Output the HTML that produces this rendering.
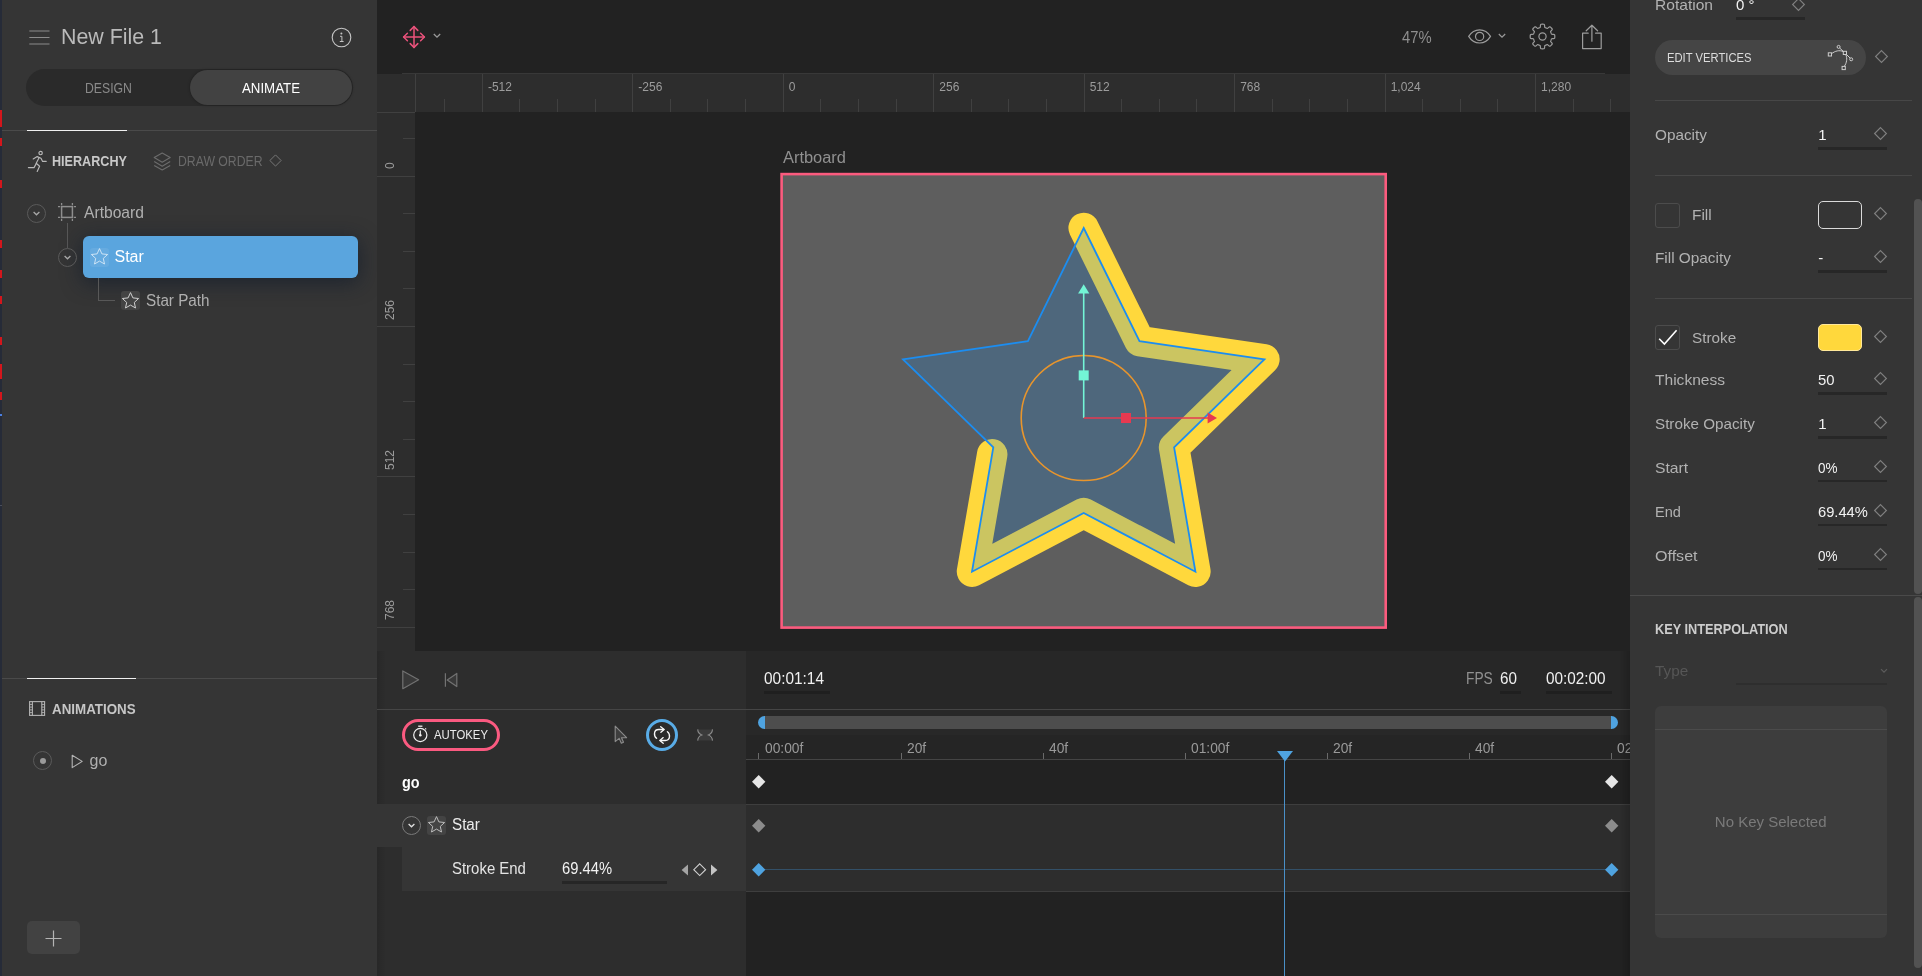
<!DOCTYPE html>
<html>
<head>
<meta charset="utf-8">
<title>New File 1</title>
<style>
*{box-sizing:border-box;margin:0;padding:0}
html,body{width:1922px;height:976px;overflow:hidden;background:#222222;font-family:"Liberation Sans",sans-serif;color:#bdbdbd}
.abs,.abs *{position:absolute}
#app{position:absolute;left:0;top:0;width:1922px;height:976px;overflow:hidden;will-change:transform}
.t{white-space:nowrap;line-height:1}
svg{overflow:visible}
/* left strip */
#strip{left:0;top:0;width:2px;height:976px;background:#262b38}
#strip i{left:0;width:2px;background:#d4161c}
/* left panel */
#left{left:2px;top:0;width:375px;height:976px;background:#353535}
/* center */
#ctop{left:377px;top:0;width:1253px;height:74px;background:#222222}
#hruler{left:377px;top:74px;width:1253px;height:38px;background:#2d2d2d}
#vruler{left:377px;top:112px;width:38px;height:539px;background:#2d2d2d}
#canvas{left:415px;top:112px;width:1215px;height:539px;background:#222222;overflow:hidden}
/* timeline */
#tl-left{left:377px;top:651px;width:369px;height:325px;background:#2d2d2d}
#tl-right{left:746px;top:651px;width:884px;height:325px;background:#222222;overflow:hidden}
/* right panel */
#right{left:1630px;top:0;width:292px;height:976px;background:#353535;overflow:hidden}

/* ---- left panel ---- */
#left .div{left:0;width:375px;height:1px;background:#4a4a4a}
#left .tab{height:1.5px;background:#f0f0f0}
.seg{left:24px;top:69px;width:327px;height:37px;border-radius:18.5px;background:#2a2a2a}
.seg .on{left:164px;top:1px;width:162px;height:35px;border-radius:17.5px;background:#424242;box-shadow:0 0 3px rgba(0,0,0,.35)}
.chev{width:19px;height:19px;border:1px solid #5a5a5a;border-radius:50%}
.sel{left:81px;top:236px;width:275px;height:42px;border-radius:6px;background:#5aa5de;box-shadow:0 4px 20px 1px rgba(16,26,44,.64)}
.ibox{width:19px;height:19px;border-radius:3px}

/* ---- rulers ---- */
.tk{background:#404040}
.rl{font-size:12px;color:#9c9c9c}

/* ---- right panel ---- */
#right .lb{left:24.8px;font-size:15px;color:#b2b2b2;transform-origin:0 50%}
#right .vl{left:188.2px;font-size:15px;color:#f2f2f2;transform-origin:0 50%}
#right .ul{left:188.2px;width:68.8px;height:2.5px;background:#272727}
#right .hd{left:24.8px;width:257.2px;height:1px;background:#474747}
.dm{width:13px;height:13px}
.thumb{left:284px;width:7.6px;border-radius:4px;background:#525252}

/* ---- timeline ---- */
.kd{width:13.4px;height:13.4px}
</style>
</head>
<body>
<div id="app" class="abs">
<div id="strip"><i style="top:110px;height:17px"></i><i style="top:138px;height:8px"></i><i style="top:180px;height:8px"></i><i style="top:240px;height:8px"></i><i style="top:270px;height:8px"></i><i style="top:296px;height:8px"></i><i style="top:337px;height:8px"></i><i style="top:364px;height:15px"></i><i style="top:392px;height:8px"></i><i style="top:414px;height:2px;background:#4a7fe0"></i><i style="top:505px;height:1px;background:#4a4e5a"></i></div>
<div id="left">
<div class="div" style="top:130px"></div>
<div class="tab" style="left:25px;top:129.6px;width:100px"></div>
<div class="div" style="top:678px"></div>
<div class="tab" style="left:25px;top:677.6px;width:109px"></div>

<!-- header -->
<svg style="left:27px;top:29px" width="22" height="17" viewBox="0 0 22 17"><path d="M0.3 2H20.5M0.3 8.5H20.5M0.3 15H20.5" stroke="#8c8c8c" stroke-width="1.1" fill="none"/></svg>
<span class="t" style="left:59px;top:26.4px;font-size:22px;color:#bababa;transform:scaleX(.972);transform-origin:0 50%">New File 1</span>
<svg style="left:329px;top:27px" width="21" height="21" viewBox="0 0 21 21"><circle cx="10.5" cy="10.5" r="9.3" fill="none" stroke="#c4c4c4" stroke-width="1.1"/><circle cx="10.4" cy="6.6" r="1" fill="#c4c4c4"/><path d="M9 9.3H10.9V14.4M8.8 14.5H12.6" stroke="#c4c4c4" stroke-width="1" fill="none"/></svg>

<!-- design / animate -->
<div class="seg"><div class="on"></div></div>
<span class="t" style="left:82.5px;top:81.4px;font-size:14px;color:#8a8a8a;transform:scaleX(.875);transform-origin:0 50%">DESIGN</span>
<span class="t" style="left:239.8px;top:81.4px;font-size:14px;color:#ffffff;transform:scaleX(.948);transform-origin:0 50%">ANIMATE</span>

<!-- hierarchy tabs -->
<svg id="ic-run" style="left:25px;top:150px" width="21" height="23" viewBox="0 0 21 23"><g fill="none" stroke="#b8b8b8" stroke-width="1.15" stroke-linecap="round" stroke-linejoin="round"><circle cx="13.6" cy="3" r="1.7"/><path d="M6.2 8.9L10.2 6.6L14 8.2L15.6 11.4H19.2"/><path d="M12.2 7.6L9.2 13.2L12.6 16.2L10.2 21.4"/><path d="M9.4 13.4L7 17.6H1.4"/></g></svg>
<span class="t" style="left:50px;top:154.4px;font-size:14px;font-weight:700;color:#c8c8c8;transform:scaleX(.9);transform-origin:0 50%">HIERARCHY</span>
<svg id="ic-layers" style="left:151px;top:152px" width="19" height="20" viewBox="0 0 19 20"><g fill="none" stroke="#6c6c6c" stroke-width="1.1" stroke-linejoin="round"><path d="M9.2 1L17.2 5.6L9.2 10.2L1.2 5.6Z"/><path d="M1.2 9.6L9.2 14.2L17.2 9.6"/><path d="M1.2 13.4L9.2 18L17.2 13.4"/></g></svg>
<span class="t" style="left:175.5px;top:154.4px;font-size:14px;color:#6a6a6a;transform:scaleX(.874);transform-origin:0 50%">DRAW ORDER</span>
<svg style="left:267px;top:154px" width="13" height="13" viewBox="0 0 13 13"><path d="M6.5 0.9L12.1 6.5L6.5 12.1L0.9 6.5Z" fill="none" stroke="#767676" stroke-width="1"/></svg>

<!-- tree -->
<div class="chev" style="left:25px;top:204px"></div>
<svg style="left:30px;top:210px" width="9" height="7" viewBox="0 0 9 7"><path d="M1.6 2L4.5 4.8L7.4 2" fill="none" stroke="#a8a8a8" stroke-width="1.3"/></svg>
<svg id="ic-artb" style="left:56px;top:203px" width="18" height="18" viewBox="0 0 18 18"><g fill="none" stroke="#8e8e8e" stroke-width="1.5"><rect x="3.6" y="3.6" width="10.8" height="10.8"/><path d="M3.6 0V2.2M14.4 0V2.2M3.6 15.8V18M14.4 15.8V18M0 3.6H2.2M0 14.4H2.2M15.8 3.6H18M15.8 14.4H18" stroke-width="1.3"/></g></svg>
<span class="t" style="left:81.8px;top:205.2px;font-size:16px;color:#b0b0b0;transform:scaleX(.977);transform-origin:0 50%">Artboard</span>
<div style="left:65px;top:223px;width:1px;height:25px;background:#585858"></div>

<div class="sel"></div>
<div class="chev" style="left:56px;top:247.5px"></div>
<svg style="left:61px;top:253.5px" width="9" height="7" viewBox="0 0 9 7"><path d="M1.6 2L4.5 4.8L7.4 2" fill="none" stroke="#a8a8a8" stroke-width="1.3"/></svg>
<div class="ibox" style="left:88px;top:247.5px;background:#66abe0"></div>
<svg style="left:88px;top:247px" width="19" height="19" viewBox="0 0 19 19"><path d="M9.5 1.6L11.9 6.9L17.6 7.5L13.3 11.4L14.5 17L9.5 14.1L4.5 17L5.7 11.4L1.4 7.5L7.1 6.9Z" fill="none" stroke="#e6f1fa" stroke-width=".8" stroke-linejoin="round"/></svg>
<span class="t" style="left:112.5px;top:248.7px;font-size:16px;color:#ffffff">Star</span>

<div style="left:96px;top:278px;width:1px;height:23px;background:#585858"></div>
<div style="left:96px;top:300px;width:17px;height:1px;background:#585858"></div>
<div class="ibox" style="left:119px;top:291px;background:#444444"></div>
<svg style="left:119px;top:290.5px" width="19" height="19" viewBox="0 0 19 19"><path d="M9.5 1.6L11.9 6.9L17.6 7.5L13.3 11.4L14.5 17L9.5 14.1L4.5 17L5.7 11.4L1.4 7.5L7.1 6.9Z" fill="none" stroke="#cfcfcf" stroke-width="1" stroke-linejoin="round"/></svg>
<span class="t" style="left:143.7px;top:293.3px;font-size:16px;color:#b0b0b0;transform:scaleX(.952);transform-origin:0 50%">Star Path</span>

<!-- animations -->
<svg id="ic-film" style="left:26.9px;top:701px" width="16.2" height="15" viewBox="0 0 16.2 15"><g fill="none" stroke="#b4b4b4" stroke-width="1.1"><rect x="0.6" y="0.6" width="15" height="13.8"/><path d="M3.4 0.6V14.4M12.8 0.6V14.4"/><path d="M0.6 3.4H3.4M0.6 6.1H3.4M0.6 8.9H3.4M0.6 11.6H3.4M12.8 3.4H15.6M12.8 6.1H15.6M12.8 8.9H15.6M12.8 11.6H15.6" stroke-width=".9"/></g></svg>
<span class="t" style="left:50px;top:701.5px;font-size:14px;font-weight:700;color:#c6c6c6;transform:scaleX(.954);transform-origin:0 50%">ANIMATIONS</span>
<div class="chev" style="left:30.8px;top:751.3px"></div>
<div style="left:38px;top:758px;width:6px;height:6px;border-radius:50%;background:#9a9a9a"></div>
<svg style="left:69px;top:754px" width="13" height="15" viewBox="0 0 13 15"><path d="M1.2 1.2L11.2 7.4L1.2 13.6Z" fill="none" stroke="#b4b4b4" stroke-width="1.1" stroke-linejoin="round"/></svg>
<span class="t" style="left:87.5px;top:752.8px;font-size:16px;color:#b0b0b0">go</span>
<div style="left:25px;top:921px;width:53px;height:33px;border-radius:5px;background:#424242"></div>
<svg style="left:43px;top:930px" width="17" height="17" viewBox="0 0 17 17"><path d="M8.5 0.5V16.5M0.5 8.5H16.5" stroke="#b4b4b4" stroke-width="1.2" fill="none"/></svg>
</div>
<div id="ctop">
<div style="left:25px;top:73px;width:1203px;height:1px;background:#383838"></div>
<svg style="left:25px;top:25px" width="24" height="24" viewBox="0 0 24 24"><g fill="none" stroke="#ea527b" stroke-width="1.5" stroke-linecap="round" stroke-linejoin="round"><path d="M12 1.6V22.4M1.6 12H22.4"/><path d="M8.2 5.4L12 1.6L15.8 5.4M8.2 18.6L12 22.4L15.8 18.6M5.4 8.2L1.6 12L5.4 15.8M18.6 8.2L22.4 12L18.6 15.8"/></g></svg>
<svg style="left:56px;top:33px" width="8" height="6" viewBox="0 0 8 6"><path d="M0.8 1L4 4.2L7.2 1" fill="none" stroke="#9a9a9a" stroke-width="1.3"/></svg>
<span class="t" style="left:1025.3px;top:29.7px;font-size:16px;color:#8e8e8e;transform:scaleX(.925);transform-origin:0 50%">47%</span>
<svg style="left:1091px;top:29px" width="23" height="15" viewBox="0 0 23 15"><g fill="none" stroke="#9c9c9c" stroke-width="1.2"><path d="M0.7 7.4C3.6 2.6 7.4 0.8 11.6 0.8C15.8 0.8 19.6 2.6 22.5 7.4C19.6 12.2 15.8 14 11.6 14C7.4 14 3.6 12.2 0.7 7.4Z"/><circle cx="11.6" cy="7.4" r="4.1"/></g></svg>
<svg style="left:1121px;top:33px" width="8" height="6" viewBox="0 0 8 6"><path d="M0.8 1L4 4.2L7.2 1" fill="none" stroke="#9a9a9a" stroke-width="1.2"/></svg>
<svg id="ic-gear" style="left:1153px;top:24px" width="25" height="25" viewBox="0 0 25 25"><g fill="none" stroke="#9c9c9c" stroke-width="1.2" stroke-linejoin="round"><path d="M12.50 0.20 L12.82 0.20 L13.14 0.22 L13.47 0.24 L13.79 0.27 L14.11 0.31 L14.38 0.61 L14.56 1.41 L14.64 2.41 L14.73 3.20 L14.91 3.52 L15.14 3.58 L15.37 3.66 L15.60 3.73 L15.83 3.82 L16.06 3.91 L16.28 4.00 L16.50 4.11 L16.72 4.21 L16.94 4.33 L17.15 4.45 L17.50 4.35 L18.12 3.85 L18.89 3.20 L19.58 2.76 L19.99 2.74 L20.24 2.94 L20.49 3.15 L20.73 3.36 L20.97 3.58 L21.20 3.80 L21.42 4.03 L21.64 4.27 L21.85 4.51 L22.06 4.76 L22.26 5.01 L22.24 5.42 L21.80 6.11 L21.15 6.88 L20.65 7.50 L20.55 7.85 L20.67 8.06 L20.79 8.28 L20.89 8.50 L21.00 8.72 L21.09 8.94 L21.18 9.17 L21.27 9.40 L21.34 9.63 L21.42 9.86 L21.48 10.09 L21.80 10.27 L22.59 10.36 L23.59 10.44 L24.39 10.62 L24.69 10.89 L24.73 11.21 L24.76 11.53 L24.78 11.86 L24.80 12.18 L24.80 12.50 L24.80 12.82 L24.78 13.14 L24.76 13.47 L24.73 13.79 L24.69 14.11 L24.39 14.38 L23.59 14.56 L22.59 14.64 L21.80 14.73 L21.48 14.91 L21.42 15.14 L21.34 15.37 L21.27 15.60 L21.18 15.83 L21.09 16.06 L21.00 16.28 L20.89 16.50 L20.79 16.72 L20.67 16.94 L20.55 17.15 L20.65 17.50 L21.15 18.12 L21.80 18.89 L22.24 19.58 L22.26 19.99 L22.06 20.24 L21.85 20.49 L21.64 20.73 L21.42 20.97 L21.20 21.20 L20.97 21.42 L20.73 21.64 L20.49 21.85 L20.24 22.06 L19.99 22.26 L19.58 22.24 L18.89 21.80 L18.12 21.15 L17.50 20.65 L17.15 20.55 L16.94 20.67 L16.72 20.79 L16.50 20.89 L16.28 21.00 L16.06 21.09 L15.83 21.18 L15.60 21.27 L15.37 21.34 L15.14 21.42 L14.91 21.48 L14.73 21.80 L14.64 22.59 L14.56 23.59 L14.38 24.39 L14.11 24.69 L13.79 24.73 L13.47 24.76 L13.14 24.78 L12.82 24.80 L12.50 24.80 L12.18 24.80 L11.86 24.78 L11.53 24.76 L11.21 24.73 L10.89 24.69 L10.62 24.39 L10.44 23.59 L10.36 22.59 L10.27 21.80 L10.09 21.48 L9.86 21.42 L9.63 21.34 L9.40 21.27 L9.17 21.18 L8.94 21.09 L8.72 21.00 L8.50 20.89 L8.28 20.79 L8.06 20.67 L7.85 20.55 L7.50 20.65 L6.88 21.15 L6.11 21.80 L5.42 22.24 L5.01 22.26 L4.76 22.06 L4.51 21.85 L4.27 21.64 L4.03 21.42 L3.80 21.20 L3.58 20.97 L3.36 20.73 L3.15 20.49 L2.94 20.24 L2.74 19.99 L2.76 19.58 L3.20 18.89 L3.85 18.12 L4.35 17.50 L4.45 17.15 L4.33 16.94 L4.21 16.72 L4.11 16.50 L4.00 16.28 L3.91 16.06 L3.82 15.83 L3.73 15.60 L3.66 15.37 L3.58 15.14 L3.52 14.91 L3.20 14.73 L2.41 14.64 L1.41 14.56 L0.61 14.38 L0.31 14.11 L0.27 13.79 L0.24 13.47 L0.22 13.14 L0.20 12.82 L0.20 12.50 L0.20 12.18 L0.22 11.86 L0.24 11.53 L0.27 11.21 L0.31 10.89 L0.61 10.62 L1.41 10.44 L2.41 10.36 L3.20 10.27 L3.52 10.09 L3.58 9.86 L3.66 9.63 L3.73 9.40 L3.82 9.17 L3.91 8.94 L4.00 8.72 L4.11 8.50 L4.21 8.28 L4.33 8.06 L4.45 7.85 L4.35 7.50 L3.85 6.88 L3.20 6.11 L2.76 5.42 L2.74 5.01 L2.94 4.76 L3.15 4.51 L3.36 4.27 L3.58 4.03 L3.80 3.80 L4.03 3.58 L4.27 3.36 L4.51 3.15 L4.76 2.94 L5.01 2.74 L5.42 2.76 L6.11 3.20 L6.88 3.85 L7.50 4.35 L7.85 4.45 L8.06 4.33 L8.28 4.21 L8.50 4.11 L8.72 4.00 L8.94 3.91 L9.17 3.82 L9.40 3.73 L9.63 3.66 L9.86 3.58 L10.09 3.52 L10.27 3.20 L10.36 2.41 L10.44 1.41 L10.62 0.61 L10.89 0.31 L11.21 0.27 L11.53 0.24 L11.86 0.22 L12.18 0.20Z"/><circle cx="12.5" cy="12.5" r="3.6"/></g></svg>
<svg style="left:1204px;top:24px" width="22" height="26" viewBox="0 0 22 26"><g fill="none" stroke="#9c9c9c" stroke-width="1.2" stroke-linecap="round" stroke-linejoin="round"><path d="M7.2 9.2H1.6V24.6H20.2V9.2H14.6"/><path d="M10.9 1.2V17.2M5.2 6.8L10.9 1.2L16.6 6.8"/></g></svg>
</div>
<div id="hruler"><div class="tk" style="left:38px;top:0;width:1px;height:38px"></div><div class="tk" style="left:67.0px;top:25px;width:1px;height:13px"></div><div class="tk" style="left:104.7px;top:0;width:1px;height:38px"></div><span class="t rl" style="left:110.9px;top:6.9px">-512</span><div class="tk" style="left:142.3px;top:25px;width:1px;height:13px"></div><div class="tk" style="left:179.9px;top:25px;width:1px;height:13px"></div><div class="tk" style="left:217.5px;top:25px;width:1px;height:13px"></div><div class="tk" style="left:255.1px;top:0;width:1px;height:38px"></div><span class="t rl" style="left:261.3px;top:6.9px">-256</span><div class="tk" style="left:292.7px;top:25px;width:1px;height:13px"></div><div class="tk" style="left:330.4px;top:25px;width:1px;height:13px"></div><div class="tk" style="left:368.0px;top:25px;width:1px;height:13px"></div><div class="tk" style="left:405.6px;top:0;width:1px;height:38px"></div><span class="t rl" style="left:411.8px;top:6.9px">0</span><div class="tk" style="left:443.2px;top:25px;width:1px;height:13px"></div><div class="tk" style="left:480.8px;top:25px;width:1px;height:13px"></div><div class="tk" style="left:518.5px;top:25px;width:1px;height:13px"></div><div class="tk" style="left:556.1px;top:0;width:1px;height:38px"></div><span class="t rl" style="left:562.3px;top:6.9px">256</span><div class="tk" style="left:593.7px;top:25px;width:1px;height:13px"></div><div class="tk" style="left:631.3px;top:25px;width:1px;height:13px"></div><div class="tk" style="left:668.9px;top:25px;width:1px;height:13px"></div><div class="tk" style="left:706.5px;top:0;width:1px;height:38px"></div><span class="t rl" style="left:712.7px;top:6.9px">512</span><div class="tk" style="left:744.2px;top:25px;width:1px;height:13px"></div><div class="tk" style="left:781.8px;top:25px;width:1px;height:13px"></div><div class="tk" style="left:819.4px;top:25px;width:1px;height:13px"></div><div class="tk" style="left:857.0px;top:0;width:1px;height:38px"></div><span class="t rl" style="left:863.2px;top:6.9px">768</span><div class="tk" style="left:894.6px;top:25px;width:1px;height:13px"></div><div class="tk" style="left:932.2px;top:25px;width:1px;height:13px"></div><div class="tk" style="left:969.9px;top:25px;width:1px;height:13px"></div><div class="tk" style="left:1007.5px;top:0;width:1px;height:38px"></div><span class="t rl" style="left:1013.7px;top:6.9px">1,024</span><div class="tk" style="left:1045.1px;top:25px;width:1px;height:13px"></div><div class="tk" style="left:1082.7px;top:25px;width:1px;height:13px"></div><div class="tk" style="left:1120.3px;top:25px;width:1px;height:13px"></div><div class="tk" style="left:1157.9px;top:0;width:1px;height:38px"></div><span class="t rl" style="left:1164.1px;top:6.9px">1,280</span><div class="tk" style="left:1195.6px;top:25px;width:1px;height:13px"></div><div class="tk" style="left:1233.2px;top:25px;width:1px;height:13px"></div></div>
<div id="vruler"><div class="tk" style="left:0;top:0;width:38px;height:1px"></div><div class="tk" style="left:26px;top:25.9px;width:12px;height:1px"></div><div class="tk" style="left:0;top:63.5px;width:38px;height:1px"></div><span class="t rl" style="left:6.8px;top:57.0px;transform:rotate(-90deg);transform-origin:0 0">0</span><div class="tk" style="left:26px;top:101.1px;width:12px;height:1px"></div><div class="tk" style="left:26px;top:138.7px;width:12px;height:1px"></div><div class="tk" style="left:26px;top:176.4px;width:12px;height:1px"></div><div class="tk" style="left:0;top:214.0px;width:38px;height:1px"></div><span class="t rl" style="left:6.8px;top:207.5px;transform:rotate(-90deg);transform-origin:0 0">256</span><div class="tk" style="left:26px;top:251.6px;width:12px;height:1px"></div><div class="tk" style="left:26px;top:289.2px;width:12px;height:1px"></div><div class="tk" style="left:26px;top:326.8px;width:12px;height:1px"></div><div class="tk" style="left:0;top:364.4px;width:38px;height:1px"></div><span class="t rl" style="left:6.8px;top:357.9px;transform:rotate(-90deg);transform-origin:0 0">512</span><div class="tk" style="left:26px;top:402.1px;width:12px;height:1px"></div><div class="tk" style="left:26px;top:439.7px;width:12px;height:1px"></div><div class="tk" style="left:26px;top:477.3px;width:12px;height:1px"></div><div class="tk" style="left:0;top:514.9px;width:38px;height:1px"></div><span class="t rl" style="left:6.8px;top:508.4px;transform:rotate(-90deg);transform-origin:0 0">768</span></div>
<div id="canvas">
<svg style="left:0;top:0" width="1215" height="539" viewBox="415 112 1215 539">
<rect x="781.6" y="174.1" width="604.1" height="453.5" fill="#5e5e5e" stroke="#fb5b7e" stroke-width="2.6"/>
<polyline points="1083.7,228.0 1139.5,341.1 1264.4,359.3 1174.1,447.4 1195.4,571.7 1083.7,513.0 972.0,571.7 992.2,454.3" fill="none" stroke="#ffd83c" stroke-width="30.5" stroke-linecap="round" stroke-linejoin="round"/>
<polygon points="1083.7,228.0 1139.5,341.1 1264.4,359.3 1174.1,447.4 1195.4,571.7 1083.7,513.0 972.0,571.7 993.3,447.4 903.0,359.3 1027.9,341.1" fill="rgba(23,134,228,0.225)" stroke="#1c8df0" stroke-width="1.8" stroke-linejoin="miter"/>
<circle cx="1083.7" cy="418.0" r="62.5" fill="none" stroke="#e8952c" stroke-width="1.6"/>
<path d="M1083.7 418.0V292" stroke="#73f5d6" stroke-width="1.6" fill="none"/>
<path d="M1083.7 284.3L1089.3 293.6H1078.1000000000001Z" fill="#73f5d6"/>
<rect x="1078.7" y="370.4" width="10" height="10" fill="#73f5d6"/>
<path d="M1083.7 418.0H1209" stroke="#e63950" stroke-width="1.6" fill="none"/>
<path d="M1217 418.0L1207.6 412.4V423.6Z" fill="#e63950"/>
<rect x="1121" y="413.0" width="10" height="10" fill="#e63950"/>
</svg>
<span class="t" style="left:368px;top:38.2px;font-size:16px;color:#909090;transform:scaleX(1.026);transform-origin:0 50%">Artboard</span>
</div>
<div id="tl-left"><div style="left:0;top:0;width:9px;height:325px;background:linear-gradient(90deg,rgba(0,0,0,.12),rgba(0,0,0,0))"></div><div style="left:0;top:58px;width:369px;height:1px;background:#454545"></div><svg style="left:25px;top:19px" width="18" height="20" viewBox="0 0 18 20"><path d="M0.8 0.9L16.6 9.8L0.8 18.7Z" fill="#393939" stroke="#727272" stroke-width="1.2" stroke-linejoin="round"/></svg><svg style="left:67px;top:21px" width="14" height="16" viewBox="0 0 14 16"><path d="M1.4 1.2V14.8M12.8 1.4V14.6L3.2 8Z" fill="#393939" stroke="#727272" stroke-width="1.2" stroke-linejoin="round"/></svg><div style="left:24.9px;top:67.7px;width:98.2px;height:32.5px;border:3.1px solid #fa5a80;border-radius:16.3px;background:#2b2b2b"></div><svg id="ic-sw" style="left:35px;top:74px" width="17" height="18" viewBox="0 0 17 18"><g fill="none" stroke="#f0f0f0" stroke-width="1.2"><circle cx="8.3" cy="10" r="6.6"/><path d="M6.2 1.2H10.4" stroke-width="1.3"/><path d="M8.3 5.6V10" /><path d="M13.2 3.4L14.2 4.4" stroke-width="1.1"/></g><circle cx="8.3" cy="10.2" r="1.3" fill="#f0f0f0"/></svg><span class="t" style="left:56.5px;top:77.3px;font-size:13px;color:#ececec;transform:scaleX(.872);transform-origin:0 50%">AUTOKEY</span><svg style="left:237px;top:74px" width="14" height="20" viewBox="0 0 14 20"><path d="M1.2 1.2V16.6L5.2 13.4L7.3 18.2L9.5 17.3L7.5 12.7H12.6Z" fill="#3e3e3e" stroke="#8c8c8c" stroke-width="1.1" stroke-linejoin="round"/></svg><div style="left:268.9px;top:67.9px;width:32.2px;height:32.2px;border:3.1px solid #59ace7;border-radius:50%;background:#2b2b2b"></div><svg id="ic-loop" style="left:275px;top:74px" width="20" height="20" viewBox="0 0 20 20"><g fill="none" stroke="#f8f8f8" stroke-width="1.35" stroke-linecap="round" stroke-linejoin="round"><path d="M4.6 13.3C1.9 11.4 1 4.5 6.8 4.5H11.8"/><path d="M8.7 1.7L12.1 4.5L8.9 7.3"/><path d="M15.4 6.7C18.1 8.6 19 15.5 13.2 15.5H8.2"/><path d="M11.2 12.6L7.9 15.5L11.2 18.3"/></g></svg><svg style="left:319.6px;top:77.6px" width="16.2" height="12" viewBox="0 0 16.2 12"><path d="M0.7 0.6L4.8 6L0.7 11.4H15.5L11.4 6L15.5 0.6Z" fill="#3b3b3b"/><path d="M0.7 0.4C0.9 3.4 2.4 5 4.8 6C2.4 7 0.9 8.6 0.7 11.6M15.5 0.4C15.3 3.4 13.8 5 11.4 6C13.8 7 15.3 8.6 15.5 11.6" fill="none" stroke="#8a8a8a" stroke-width="1.1"/></svg><span class="t" style="left:25.19999999999999px;top:123.5px;font-size:16px;font-weight:700;color:#ffffff;transform:scaleX(.9);transform-origin:0 50%">go</span><div style="left:0;top:153px;width:369px;height:43px;background:#353535"></div><div style="left:25px;top:196px;width:344px;height:44px;background:#353535"></div><div class="chev" style="left:25.0px;top:164.7px;border-color:#7a7a7a"></div><svg style="left:30.0px;top:171px" width="9" height="7" viewBox="0 0 9 7"><path d="M1.6 2L4.5 4.8L7.4 2" fill="none" stroke="#e0e0e0" stroke-width="1.3"/></svg><div class="ibox" style="left:50px;top:164.7px;background:#444444"></div><svg style="left:50px;top:164.2px" width="19" height="19" viewBox="0 0 19 19"><path d="M9.5 1.6L11.9 6.9L17.6 7.5L13.3 11.4L14.5 17L9.5 14.1L4.5 17L5.7 11.4L1.4 7.5L7.1 6.9Z" fill="none" stroke="#bdbdbd" stroke-width="1" stroke-linejoin="round"/></svg><span class="t" style="left:75.4px;top:166.1px;font-size:16px;color:#ececec;transform:scaleX(.95);transform-origin:0 50%">Star</span><span class="t" style="left:75.4px;top:209.7px;font-size:16px;color:#e4e4e4;transform:scaleX(.934);transform-origin:0 50%">Stroke End</span><span class="t" style="left:185.3px;top:209.7px;font-size:16px;color:#f2f2f2;transform:scaleX(.922);transform-origin:0 50%">69.44%</span><div style="left:185.3px;top:230.4px;width:104.5px;height:2.5px;background:#262626"></div><svg style="left:303.5px;top:212.6px" width="8" height="12" viewBox="0 0 8 12"><path d="M7 0.4V11.6L0.6 6Z" fill="#a4a4a4"/></svg><svg style="left:315.5px;top:211.9px" width="13.4" height="13.4" viewBox="0 0 13.4 13.4"><path d="M6.7 0.8L12.6 6.7L6.7 12.6L0.8 6.7Z" fill="none" stroke="#d0d0d0" stroke-width="1.1"/></svg><svg style="left:333.4px;top:212.6px" width="8" height="12" viewBox="0 0 8 12"><path d="M1 0.4V11.6L7.4 6Z" fill="#c4c4c4"/></svg></div>
<div id="tl-right"><div style="left:0;top:0;width:884px;height:58px;background:#272727"></div><div style="left:0;top:58px;width:884px;height:1px;background:#454545"></div><div style="left:0;top:59px;width:884px;height:25px;background:#282828"></div><div style="left:0;top:84px;width:884px;height:24px;background:#252525"></div><div style="left:0;top:108px;width:884px;height:1px;background:#454545"></div><span class="t" style="left:17.7px;top:20.0px;font-size:16px;color:#f0f0f0;transform:scaleX(.963);transform-origin:0 50%">00:01:14</span><div style="left:17.7px;top:40.2px;width:66.3px;height:2.6px;background:#1f1f1f"></div><span class="t" style="left:720.2px;top:19.8px;font-size:16px;color:#909090;transform:scaleX(.86);transform-origin:0 50%">FPS</span><span class="t" style="left:753.8px;top:19.8px;font-size:16px;color:#f0f0f0;transform:scaleX(.95);transform-origin:0 50%">60</span><div style="left:753.8px;top:40.2px;width:21.2px;height:2.6px;background:#1f1f1f"></div><span class="t" style="left:800.0px;top:19.8px;font-size:16px;color:#f0f0f0;transform:scaleX(.957);transform-origin:0 50%">00:02:00</span><div style="left:800.0px;top:40.2px;width:66px;height:2.6px;background:#1f1f1f"></div><div style="left:18px;top:64.8px;width:847.5px;height:13.3px;background:#4d4d4d"></div><div style="left:11.8px;top:64.8px;width:7.4px;height:13.3px;border-radius:6.65px 0 0 6.65px;background:#4fa3e0"></div><div style="left:864.6px;top:64.8px;width:7px;height:13.3px;border-radius:0 6.65px 6.65px 0;background:#4fa3e0"></div><div style="left:12.4px;top:102.2px;width:1px;height:6px;background:#6a6a6a"></div><span class="t" style="left:18.7px;top:89.8px;font-size:14px;color:#9a9a9a;transform:scaleX(.985);transform-origin:0 50%">00:00f</span><div style="left:154.5px;top:102.2px;width:1px;height:6px;background:#6a6a6a"></div><span class="t" style="left:160.8px;top:89.8px;font-size:14px;color:#9a9a9a;transform:scaleX(.985);transform-origin:0 50%">20f</span><div style="left:296.6px;top:102.2px;width:1px;height:6px;background:#6a6a6a"></div><span class="t" style="left:302.9px;top:89.8px;font-size:14px;color:#9a9a9a;transform:scaleX(.985);transform-origin:0 50%">40f</span><div style="left:438.6px;top:102.2px;width:1px;height:6px;background:#6a6a6a"></div><span class="t" style="left:444.9px;top:89.8px;font-size:14px;color:#9a9a9a;transform:scaleX(.985);transform-origin:0 50%">01:00f</span><div style="left:580.7px;top:102.2px;width:1px;height:6px;background:#6a6a6a"></div><span class="t" style="left:587.0px;top:89.8px;font-size:14px;color:#9a9a9a;transform:scaleX(.985);transform-origin:0 50%">20f</span><div style="left:722.8px;top:102.2px;width:1px;height:6px;background:#6a6a6a"></div><span class="t" style="left:729.1px;top:89.8px;font-size:14px;color:#9a9a9a;transform:scaleX(.985);transform-origin:0 50%">40f</span><div style="left:864.9px;top:102.2px;width:1px;height:6px;background:#6a6a6a"></div><span class="t" style="left:871.2px;top:89.8px;font-size:14px;color:#9a9a9a;transform:scaleX(.985);transform-origin:0 50%">02:00f</span><div style="left:0;top:153px;width:884px;height:87px;background:#2d2d2d"></div><div style="left:0;top:153px;width:884px;height:1px;background:#3e3e3e"></div><div style="left:0;top:240px;width:884px;height:1px;background:#3e3e3e"></div><div style="left:13px;top:217.8px;width:852.8px;height:1px;background:#335068"></div><svg class="kd" style="left:6.4px;top:124.2px" viewBox="0 0 13.4 13.4"><path d="M6.7 0L13.4 6.7L6.7 13.4L0 6.7Z" fill="#e6e6e6"/></svg><svg class="kd" style="left:6.4px;top:167.9px" viewBox="0 0 13.4 13.4"><path d="M6.7 0L13.4 6.7L6.7 13.4L0 6.7Z" fill="#8c8c8c"/></svg><svg class="kd" style="left:6.4px;top:211.5px" viewBox="0 0 13.4 13.4"><path d="M6.7 0L13.4 6.7L6.7 13.4L0 6.7Z" fill="#4fa3e0"/></svg><svg class="kd" style="left:859.1px;top:124.2px" viewBox="0 0 13.4 13.4"><path d="M6.7 0L13.4 6.7L6.7 13.4L0 6.7Z" fill="#e6e6e6"/></svg><svg class="kd" style="left:859.1px;top:167.9px" viewBox="0 0 13.4 13.4"><path d="M6.7 0L13.4 6.7L6.7 13.4L0 6.7Z" fill="#8c8c8c"/></svg><svg class="kd" style="left:859.1px;top:211.5px" viewBox="0 0 13.4 13.4"><path d="M6.7 0L13.4 6.7L6.7 13.4L0 6.7Z" fill="#4fa3e0"/></svg><div style="left:538.1px;top:106px;width:1.3px;height:219px;background:#4a90c8"></div><svg style="left:530.7px;top:99.6px" width="16" height="10.4" viewBox="0 0 16 10.4"><path d="M0 0H16L8 10.4Z" fill="#4fa3e0"/></svg><div style="left:874px;top:0;width:10px;height:325px;background:linear-gradient(90deg,rgba(0,0,0,0),rgba(0,0,0,.18))"></div></div>
<div id="right"><span class="t lb" style="top:-2.7px;transform:scaleX(1.038)">Rotation</span><span class="t vl" style="left:106px;top:-2.7px">0 °</span><div class="ul" style="left:106px;top:17.2px;width:69px"></div><svg class="dm" style="left:161.5px;top:-2.4px" viewBox="0 0 13 13"><path d="M6.5 0.6L12.4 6.5L6.5 12.4L0.6 6.5Z" fill="none" stroke="#808080" stroke-width="1.15"/></svg><div style="left:24.8px;top:40px;width:211px;height:35px;border-radius:17.5px;background:#454545"></div><span class="t" style="left:37px;top:51.6px;font-size:12px;color:#dcdcdc;transform:scaleX(.937);transform-origin:0 50%">EDIT VERTICES</span><svg id="ic-ev" style="left:197px;top:44px" width="27" height="27" viewBox="0 0 27 27"><g fill="none" stroke="#cdcdcd" stroke-width="1"><path d="M4.6 9.7C8 6.9 12.4 5.8 16.2 7.6"/><path d="M18.8 10.6C20.6 14.6 19.6 19 17.4 22.2"/><path d="M12.7 4.1L16.4 7.4M19.4 10.4L23.1 14.1"/><rect x="1.3" y="8.8" width="3.2" height="3.2"/><rect x="16.3" y="7.3" width="3.2" height="3.2"/><rect x="15.1" y="22.4" width="3.2" height="3.2"/><circle cx="11.6" cy="2.9" r="1.5"/><circle cx="24.2" cy="15.3" r="1.5"/></g></svg><svg class="dm" style="left:244.5px;top:50.3px" viewBox="0 0 13 13"><path d="M6.5 0.6L12.4 6.5L6.5 12.4L0.6 6.5Z" fill="none" stroke="#808080" stroke-width="1.15"/></svg><div class="hd" style="top:100px"></div><div class="hd" style="top:175px"></div><div class="hd" style="top:298px"></div><span class="t lb" style="top:127.2px;transform:scaleX(1.02)">Opacity</span><span class="t vl" style="top:127.2px;transform:scaleX(1)">1</span><div class="ul" style="top:147.2px"></div><svg class="dm" style="left:243.9px;top:127.3px" viewBox="0 0 13 13"><path d="M6.5 0.6L12.4 6.5L6.5 12.4L0.6 6.5Z" fill="none" stroke="#808080" stroke-width="1.15"/></svg><span class="t lb" style="top:250.1px;transform:scaleX(1.023)">Fill Opacity</span><span class="t vl" style="top:250.1px;transform:scaleX(1)">-</span><div class="ul" style="top:270.1px"></div><svg class="dm" style="left:243.9px;top:250.2px" viewBox="0 0 13 13"><path d="M6.5 0.6L12.4 6.5L6.5 12.4L0.6 6.5Z" fill="none" stroke="#808080" stroke-width="1.15"/></svg><span class="t lb" style="top:372.3px;transform:scaleX(1.037)">Thickness</span><span class="t vl" style="top:372.3px;transform:scaleX(0.99)">50</span><div class="ul" style="top:392.3px"></div><svg class="dm" style="left:243.9px;top:372.4px" viewBox="0 0 13 13"><path d="M6.5 0.6L12.4 6.5L6.5 12.4L0.6 6.5Z" fill="none" stroke="#808080" stroke-width="1.15"/></svg><span class="t lb" style="top:416.1px;transform:scaleX(1.014)">Stroke Opacity</span><span class="t vl" style="top:416.1px;transform:scaleX(1)">1</span><div class="ul" style="top:436.1px"></div><svg class="dm" style="left:243.9px;top:416.2px" viewBox="0 0 13 13"><path d="M6.5 0.6L12.4 6.5L6.5 12.4L0.6 6.5Z" fill="none" stroke="#808080" stroke-width="1.15"/></svg><span class="t lb" style="top:459.9px;transform:scaleX(1.048)">Start</span><span class="t vl" style="top:459.9px;transform:scaleX(0.9)">0%</span><div class="ul" style="top:479.9px"></div><svg class="dm" style="left:243.9px;top:460.0px" viewBox="0 0 13 13"><path d="M6.5 0.6L12.4 6.5L6.5 12.4L0.6 6.5Z" fill="none" stroke="#808080" stroke-width="1.15"/></svg><span class="t lb" style="top:503.7px;transform:scaleX(0.97)">End</span><span class="t vl" style="top:503.7px;transform:scaleX(0.98)">69.44%</span><div class="ul" style="top:523.7px"></div><svg class="dm" style="left:243.9px;top:503.8px" viewBox="0 0 13 13"><path d="M6.5 0.6L12.4 6.5L6.5 12.4L0.6 6.5Z" fill="none" stroke="#808080" stroke-width="1.15"/></svg><span class="t lb" style="top:547.5px;transform:scaleX(1.07)">Offset</span><span class="t vl" style="top:547.5px;transform:scaleX(0.9)">0%</span><div class="ul" style="top:567.5px"></div><svg class="dm" style="left:243.9px;top:547.6px" viewBox="0 0 13 13"><path d="M6.5 0.6L12.4 6.5L6.5 12.4L0.6 6.5Z" fill="none" stroke="#808080" stroke-width="1.15"/></svg><div style="left:25.3px;top:202.5px;width:25px;height:25px;border:1px solid #4c4c4c;border-radius:3px"></div><span class="t lb" style="left:62px;top:207.3px;transform:scaleX(1.028)">Fill</span><div style="left:188px;top:201px;width:44px;height:28px;border:1.5px solid #dadada;border-radius:5px"></div><svg class="dm" style="left:243.9px;top:207.3px" viewBox="0 0 13 13"><path d="M6.5 0.6L12.4 6.5L6.5 12.4L0.6 6.5Z" fill="none" stroke="#808080" stroke-width="1.15"/></svg><div style="left:25.3px;top:325px;width:25px;height:25px;border:1px solid #4c4c4c;border-radius:3px"></div><svg style="left:28px;top:328px" width="20" height="19" viewBox="0 0 20 19"><path d="M1.2 10.8L6.4 16L18.6 2.2" fill="none" stroke="#ffffff" stroke-width="1.6"/></svg><span class="t lb" style="left:62px;top:330.3px;transform:scaleX(1.019)">Stroke</span><div style="left:188px;top:323.6px;width:44px;height:27.4px;border:1px solid #ffe89a;border-radius:5px;background:#ffd83c"></div><svg class="dm" style="left:243.9px;top:330.3px" viewBox="0 0 13 13"><path d="M6.5 0.6L12.4 6.5L6.5 12.4L0.6 6.5Z" fill="none" stroke="#808080" stroke-width="1.15"/></svg><div style="left:0;top:595px;width:292px;height:1px;background:#4a4a4a"></div><span class="t" style="left:24.6px;top:622.3px;font-size:14px;font-weight:700;color:#cccccc;transform:scaleX(.911);transform-origin:0 50%">KEY INTERPOLATION</span><span class="t" style="left:24.6px;top:662.9px;font-size:15px;color:#565656;transform:scaleX(1.02);transform-origin:0 50%">Type</span><div style="left:105.7px;top:683.4px;width:151.3px;height:2px;background:#2e2e2e"></div><svg style="left:250px;top:668px" width="8" height="6" viewBox="0 0 8 6"><path d="M1 1.2L4 4.2L7 1.2" fill="none" stroke="#5c5c5c" stroke-width="1.2"/></svg><div style="left:25.3px;top:706px;width:231.7px;height:232px;border-radius:6px;background:#3d3d3d"></div><div style="left:25.3px;top:729px;width:231.7px;height:1px;background:#4b4b4b"></div><div style="left:25.3px;top:914px;width:231.7px;height:1px;background:#4b4b4b"></div><span class="t" style="left:84.8px;top:814.3px;font-size:15px;color:#7a7a7a;transform-origin:0 50%">No Key Selected</span><div class="thumb" style="top:199px;height:395px"></div><div class="thumb" style="top:597px;height:371px"></div></div>
</div>
</body>
</html>
